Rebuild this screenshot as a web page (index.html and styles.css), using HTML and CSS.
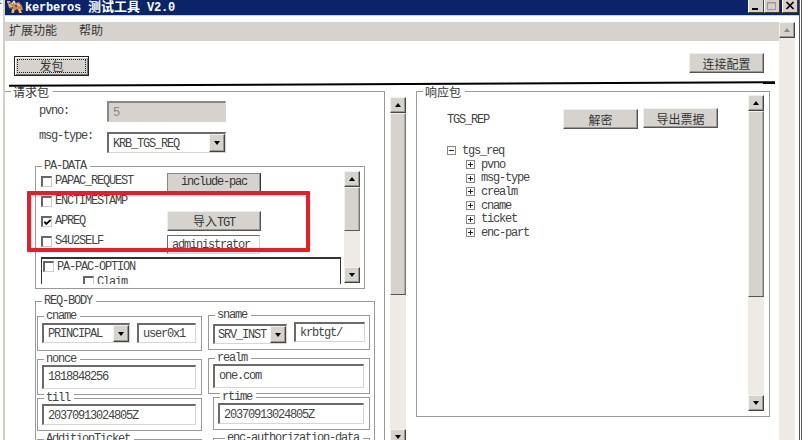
FILE: index.html
```html
<!DOCTYPE html>
<html lang="zh-CN">
<head>
<meta charset="utf-8">
<title>kerberos 测试工具 V2.0</title>
<link rel="stylesheet" href="styles.css">
</head>
<body>
<div class="screen">
<div class="gutter">:</div>
<div class="window">
  <header class="titlebar">
    <svg class="app-icon" viewBox="0 0 16 13"><path d="M0 1l3 0 1 2 3-3 2 3 3-1 3 4 1 4-2 0 1 3H12l-1-3-3 0-1 3H4l1-4-3-1z" fill="#c98a4c"/><path d="M0 2h3M5 4l2-3 1 3M10 4l3 2M6 9v4M12 9l2 4M2 5l3 2" stroke="#f8e7c9" fill="none"/><path d="M2 3h1M8 6h2M4 8h2M9 10h2" stroke="#34211a"/></svg>
    <h1>kerberos <span>测试工具</span> V2.0</h1>
    <div class="win-btns">
      <i class="wb"><svg viewBox="0 0 14 12"><path d="M3 9h6" stroke="#000" stroke-width="2"/></svg></i>
      <i class="wb"><svg viewBox="0 0 14 12"><path d="M2.500 2.500h8v7h-8zM2 3h9" stroke="#999" fill="none"/></svg></i>
      <i class="wb close"><svg viewBox="0 0 14 12"><path d="M3.500 2l7 7M10.500 2l-7 7" stroke="#000" stroke-width="1.7"/></svg></i>
    </div>
  </header>
  <div class="client">
    <main>
      <nav class="menu zh"><span>扩展功能</span><span>帮助</span></nav>
      <div class="toolbar zh">
        <button class="btn send"><span>发包</span></button>
        <button class="btn config">连接配置</button>
      </div>
      <div class="rule"></div>
      <div class="panels">
        <section class="request">
          <div class="request-group">
            <span class="legend zh">请求包</span>
            <div class="field pvno"><label>pvno:</label><div class="input disabled">5</div></div>
            <div class="field msgtype"><label>msg-type:</label><div class="input select"><span>KRB_TGS_REQ</span><b class="arrow down"></b></div></div>
            <div class="group padata">
              <span class="legend">PA-DATA</span>
              <div class="pa-body">
                <div class="pa-list">
                  <div class="check-row"><i class="cb"></i><span>PAPAC_REQUEST</span><button class="btn pac">include-pac</button></div>
                  <div class="check-row"><i class="cb"></i><span>ENCTIMESTAMP</span></div>
                  <div class="check-row"><i class="cb"><svg viewBox="0 0 10 10"><path d="M1.500 4l2.200 2.600L8.500 2" stroke="#000" stroke-width="2" fill="none"/></svg></i><span>APREQ</span><button class="btn tgt"><span class="zh">导入</span>TGT</button></div>
                  <div class="check-row"><i class="cb"></i><span>S4U2SELF</span><div class="input admin">administrator</div></div>
                  <div class="options">
                    <div class="check-row"><i class="cb"></i><span>PA-PAC-OPTION</span></div>
                    <div class="check-row claim"><i class="cb"></i><span>Claim</span></div>
                  </div>
                </div>
                <div class="scroll pa-scroll"><b class="arrow up"></b><div class="thumb"></div><b class="arrow down"></b></div>
              </div>
            </div>
            <div class="group reqbody">
              <span class="legend">REQ-BODY</span>
              <div class="cols">
                <div class="col">
                  <div class="group names"><span class="legend">cname</span><div class="pair"><div class="input select"><span>PRINCIPAL</span><b class="arrow down"></b></div><div class="input nm">user0x1</div></div></div>
                  <div class="group nonce"><span class="legend">nonce</span><div class="input">1818848256</div></div>
                  <div class="group till"><span class="legend">till</span><div class="input">20370913024805Z</div></div>
                  <div class="group last"><span class="legend">AdditionTicket</span></div>
                </div>
                <div class="col second">
                  <div class="group names"><span class="legend">sname</span><div class="pair"><div class="input select"><span>SRV_INST</span><b class="arrow down"></b></div><div class="input nm">krbtgt/</div></div></div>
                  <div class="group nonce"><span class="legend">realm</span><div class="input">one.com</div></div>
                  <div class="group till"><span class="legend">rtime</span><div class="input">20370913024805Z</div></div>
                  <div class="group last"><span class="legend">enc-authorization-data</span></div>
                </div>
              </div>
            </div>
          </div>
          <div class="scroll request-scroll"><b class="arrow up"></b><div class="thumb"></div><b class="arrow down"></b></div>
        </section>
        <section class="group response">
          <span class="legend zh">响应包</span>
          <div class="response-body">
            <div class="response-main">
              <div class="rep"><span>TGS_REP</span><button class="btn zh">解密</button><button class="btn zh export">导出票据</button></div>
              <ul class="tree">
                <li class="root"><i class="node minus"></i>tgs_req</li>
                <li><i class="node"></i>pvno</li>
                <li><i class="node"></i>msg-type</li>
                <li><i class="node"></i>crealm</li>
                <li><i class="node"></i>cname</li>
                <li><i class="node"></i>ticket</li>
                <li><i class="node"></i>enc-part</li>
              </ul>
            </div>
            <div class="scroll response-scroll"><b class="arrow up"></b><div class="thumb"></div><b class="arrow down"></b></div>
          </div>
        </section>
      </div>
    </main>
    <div class="scroll page-scroll"><b class="arrow up off"></b></div>
  </div>
</div>
<div class="highlight"></div>
</div>
</body>
</html>
```
FILE: styles.css
```css
* { box-sizing: border-box; }
body {
  margin: 0;
  overflow: hidden;
  background: #fff;
  color: #444;
  font: 12px/12px "Liberation Mono", "Noto Sans CJK SC", monospace;
  letter-spacing: -1.2px;
}
.screen { position: relative; display: flex; width: 810px; height: 440px; overflow: hidden; }
.gutter { width: 3px; height: 9px; line-height: 4px; font-size: 9px; text-indent: -2px; color: #222; }
.window {
  width: 799px;
  height: 440px;
  flex: none;
  border-left: 2px solid #d4d0c8;
  border-right: 3px double #555;
}
.zh { font-family: "Noto Sans CJK SC", sans-serif; letter-spacing: 0; color: #333; }

/* title bar */
.titlebar { display: flex; height: 16px; background: #0a246a; border-bottom: 1px solid #d4d0c8; padding-left: 2px; }
.app-icon { width: 16px; height: 13px; flex: none; }
h1 { margin: 0 0 0 2px; font-size: 12px; line-height: 12px; letter-spacing: -.2px; color: #fff; white-space: pre; height: 15px; }
h1 span { font: bold 13px/12px "Noto Sans CJK SC", sans-serif; letter-spacing: 0; }
.win-btns { display: flex; margin-left: auto; padding-right: 1px; }
.wb { width: 16px; height: 13px; background: #d4d0c8; border: solid; border-width: 0 1px 1px 1px; border-color: #fff #404040 #404040 #fff; }
.wb svg { display: block; width: 14px; height: 12px; }
.close { margin-left: 2px; }

.client { display: flex; padding-top: 6px; height: 424px; }
main { width: 774px; }
.menu { display: flex; gap: 22px; height: 19px; background: #d6d3ce; padding-left: 4px; line-height: 15px; }
.toolbar { display: flex; justify-content: space-between; align-items: flex-start; height: 42px; padding: 12px 15px 0 9px; }
.btn {
  display: block;
  width: 75px;
  height: 20px;
  padding: 0;
  flex: none;
  background: #d6d3ce;
  border: 1px solid;
  border-color: #eee #555 #555 #eee;
  box-shadow: inset -1px -1px #999;
  font-size: 12px;
  line-height: 17px;
  color: #333;
  text-align: center;
}
.btn:not(.zh) { font-family: "Liberation Mono", monospace; letter-spacing: -1.2px; }
.toolbar .btn { font-family: "Noto Sans CJK SC", sans-serif; letter-spacing: 0; }
.send { margin-top: 3px; border-color: #222; box-shadow: inset 1px 1px #fff, inset -1px -1px #777; padding: 2px; }
.send span { display: block; height: 14px; line-height: 12px; border: 1px dotted #222; }
.rule { position: relative; z-index: 1; width: 766px; height: 2px; margin: 0 0 0 4px; background: #000; transform: skewY(-.28deg); }

/* grouping boxes */
.panels { display: flex; height: 354px; }
.group { border: 1px solid #999; display: flow-root; }
.legend { display: block; width: max-content; height: 12px; line-height: 13px; margin: -7px 0 0 6px; padding: 0 4px 0 2px; background: #fff; white-space: nowrap; position: relative; }
.request { display: flex; width: 402px; height: 355px; }
.request-group { width: 380px; height: 360px; margin-top: 6px; display: flow-root; border-top: 1px solid #999; border-right: 1px solid #999; }
.field { display: flex; height: 22px; }
.field label { width: 68px; }
.pvno { margin: 4px 0 0 34px; }
.pvno label { margin-top: 4px; }
.msgtype { margin: 9px 0 0 34px; height: 21px; }
.msgtype label { margin-top: -2px; }
.input {
  width: 119px;
  height: 21px;
  padding-left: 4px;
  background: #fff;
  border: 1px solid #d9d6d2;
  border-top: 2px solid #6b6b6b;
  border-left: 2px solid #6b6b6b;
  line-height: 20px;
  white-space: nowrap;
}
.disabled { background: #d6d3ce; color: #888; border-color: #888 #d6d3ce #d6d3ce #888; }
.select { display: flex; }
.select .arrow { margin-left: auto; height: 100%; width: 16px; }
.arrow { display: flex; align-items: center; justify-content: center; width: 16px; height: 16px; flex: none; background: #d6d3ce; border: 1px solid; border-color: #f4f2ee #444 #444 #f4f2ee; box-shadow: inset -1px -1px #999; }
.arrow::after { content: ""; border: solid transparent; border-width: 4px 3.500px 0; border-top-color: #000; }
.up::after { border-width: 0 3.500px 4px; border-bottom-color: #000; }
.off::after { border-bottom-color: #888; }
.scroll { display: flex; flex-direction: column; width: 16px; background: #eeebe7; flex: none; }
.scroll .arrow.down { margin-top: auto; }
.thumb { background: #d6d3ce; border: 1px solid; border-color: #f4f2ee #777 #555 #f4f2ee; box-shadow: inset -1px 0 #aaa; }

/* pre-authentication data */
.padata { width: 330px; height: 123px; margin: 13px 0 0 30px; }
.pa-body { display: flex; margin-top: -1px; padding-left: 5px; }
.pa-list { width: 300px; margin-right: 3px; }
.check-row { display: flex; align-items: center; height: 20px; }
.cb { width: 11px; height: 11px; margin-right: 3px; flex: none; border: solid; border-width: 2px 1px 1px 2px; border-color: #666 #ccc #ccc #666; background: #fff; }
.cb svg { display: block; width: 9px; height: 9px; }
.check-row > span { width: 112px; line-height: 14px; }
.pac, .tgt { width: 94px; }
.pac { margin-top: 3px; border-color: #888 #333 #666 #888; }
.admin { width: 93px; height: 19px; margin-top: 6px; border-width: 1px; line-height: 18px; }
.options { height: 27px; margin-top: 6px; border: solid #333; border-width: 2px 1px 0; overflow: hidden; }
.options .check-row { height: 15px; padding-left: 1px; }
.options .claim { padding-left: 41px; }
.pa-scroll { height: 112px; }
.pa-scroll .thumb { height: 44px; }

/* request body */
.reqbody { width: 340px; height: 150px; margin: 12px 0 0 30px; border-bottom: 0; }
.cols { display: flex; padding: 9px 0 0 1px; }
.col { width: 165px; margin-right: 6px; flex: none; }
.second { width: 162px; margin-top: -1px; margin-right: 0; }
.names { height: 35px; }
.names .input { height: 20px; line-height: 19px; }
.col > .group > .input { width: 154px; margin: 0 0 0 4px; }
.second > .group > .input { width: 151px; }
.pair { display: flex; justify-content: space-between; padding: 1px 5px 0 4px; }
.pair .select { width: 88px; }
.pair .nm { width: 59px; }
.second .pair { padding-right: 4px; }
.second .pair .select { width: 74px; margin-top: 2px; padding-left: 3px; }
.second .pair .nm { width: 71px; }
.nonce { height: 36px; margin-top: 8px; }
.col .nonce .input { height: 24px; line-height: 21px; }
.till { height: 33px; margin-top: 3px; }
.second .till { margin-left: 5px; }
.second .till .input { width: 146px; }
.last { height: 30px; margin-top: 8px; }
.second .last { margin-left: 5px; }
.second .last .legend { margin-left: 11px; }
.request-scroll { margin: 12px 0 0 5px; height: 348px; }
.request-scroll .thumb { height: 182px; }

/* response */
.response { width: 354px; height: 326px; margin: 6px 0 0 9px; }
.response-body { display: flex; margin-top: -2px; }
.response-main { width: 331px; padding-left: 30px; }
.rep { display: flex; padding-top: 14px; }
.rep > span { width: 116px; padding-top: 5px; }
.rep .export { margin: -1px 0 0 5px; }
.tree { margin: 15px 0 0; padding: 0; list-style: none; }
.tree li { display: flex; align-items: center; height: 13.700px; line-height: 14px; padding-left: 19px; }
.tree .root { padding-left: 0; }
.node { width: 9px; height: 9px; margin-right: 6px; border: 1px solid #888; background: linear-gradient(#222,#222) center/5px 1px no-repeat, linear-gradient(#222,#222) center/1px 5px no-repeat; }
.node.minus { background: linear-gradient(#222,#222) center/5px 1px no-repeat; }
.response-scroll { height: 316px; }
.response-scroll .thumb { height: 186px; }
.page-scroll { height: 418px; }

/* annotation drawn over the form */
.highlight { position: absolute; left: 27px; top: 191px; width: 283px; height: 61px; border: 4px solid #ed1c24; border-radius: 1px; }
```
